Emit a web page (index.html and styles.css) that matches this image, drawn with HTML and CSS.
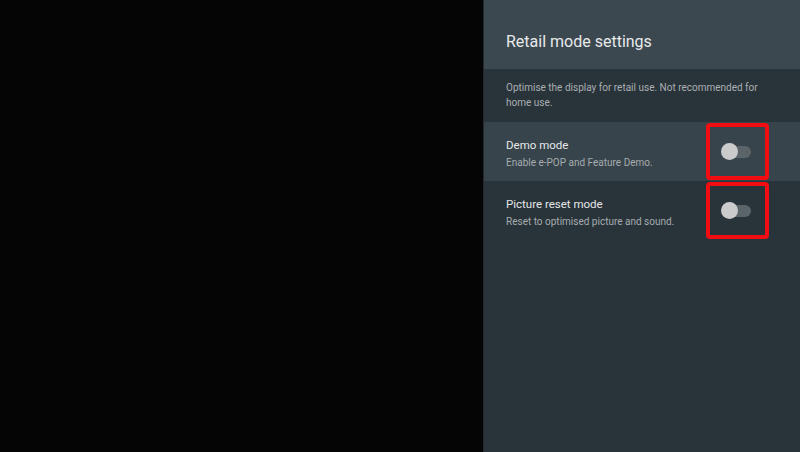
FILE: index.html
```html
<!DOCTYPE html>
<html lang="en">
<head>
    <meta charset="UTF-8">
    <meta name="viewport" content="width=device-width, initial-scale=1.0">
    <title>Retail mode settings</title>
    <link rel="stylesheet" href="styles.css">
</head>
<body>
    <div class="screen">
        <!-- TV picture area (dimmed) -->
        <div class="backdrop"></div>

        <!-- Settings side panel -->
        <div class="panel">
            <div class="panel-header">Retail mode settings</div>
            <div class="panel-desc">Optimise the display for retail use. Not recommended for home use.</div>

            <div class="setting-row focused">
                <div class="setting-text">
                    <div class="setting-title">Demo mode</div>
                    <div class="setting-sub">Enable e-POP and Feature Demo.</div>
                </div>
                <div class="highlight-box">
                    <div class="toggle"></div>
                </div>
            </div>

            <div class="setting-row">
                <div class="setting-text">
                    <div class="setting-title">Picture reset mode</div>
                    <div class="setting-sub">Reset to optimised picture and sound.</div>
                </div>
                <div class="highlight-box">
                    <div class="toggle"></div>
                </div>
            </div>
        </div>
    </div>
</body>
</html>
```

FILE: styles.css
```css
/* Page reset */
body {
    margin: 0;
    background-color: #040404;
    font-family: Roboto, "Noto Sans", sans-serif;
}
.screen {
    display: flex;
    width: 800px;
    height: 452px;
    overflow: hidden;
}
.backdrop {
    flex: 1;
    background-color: #050505;
}
/* Side panel */
.panel {
    width: 317px;
    background-color: #29333a;
    border-left: 1px solid #222a2f;
    box-sizing: border-box;
}
.panel-header {
    height: 69px;
    box-sizing: border-box;
    padding: 32px 0 0 22px;
    font-size: 16px;
    line-height: 20px;
    color: #e8eaeb;
    background-color: #3b4850;
}
.panel-desc {
    height: 53px;
    box-sizing: border-box;
    padding: 11px 40px 0 22px;
    font-size: 10px;
    line-height: 15px;
    color: #a9afb2;
}
/* Setting rows */
.setting-row {
    display: flex;
    align-items: center;
    height: 59px;
    padding: 0 31px 0 22px;
}
.setting-row.focused {
    background-color: #38444b;
}
.setting-text {
    flex: 1;
    margin-top: 2px;
}
.setting-title {
    font-size: 11.5px;
    line-height: 20px;
    color: #e4e7e8;
}
.setting-sub {
    font-size: 10px;
    line-height: 16px;
    color: #a6acaf;
}
/* Red annotation box round the toggle */
.highlight-box {
    display: flex;
    align-items: center;
    justify-content: center;
    width: 63px;
    height: 57px;
    box-sizing: border-box;
    border: 4px solid #f20d12;
    border-radius: 4px;
    padding-right: 4px;
}
/* Switch (off state) */
.toggle {
    position: relative;
    width: 30px;
    height: 17px;
}
.toggle::before {
    content: "";
    position: absolute;
    left: 9px;
    top: 3px;
    width: 21px;
    height: 12px;
    border-radius: 6px;
    background-color: #5b6569;
}
.toggle::after {
    content: "";
    position: absolute;
    left: 0;
    top: 0;
    width: 17px;
    height: 17px;
    border-radius: 50%;
    background-color: #cbcbcb;
}
```
